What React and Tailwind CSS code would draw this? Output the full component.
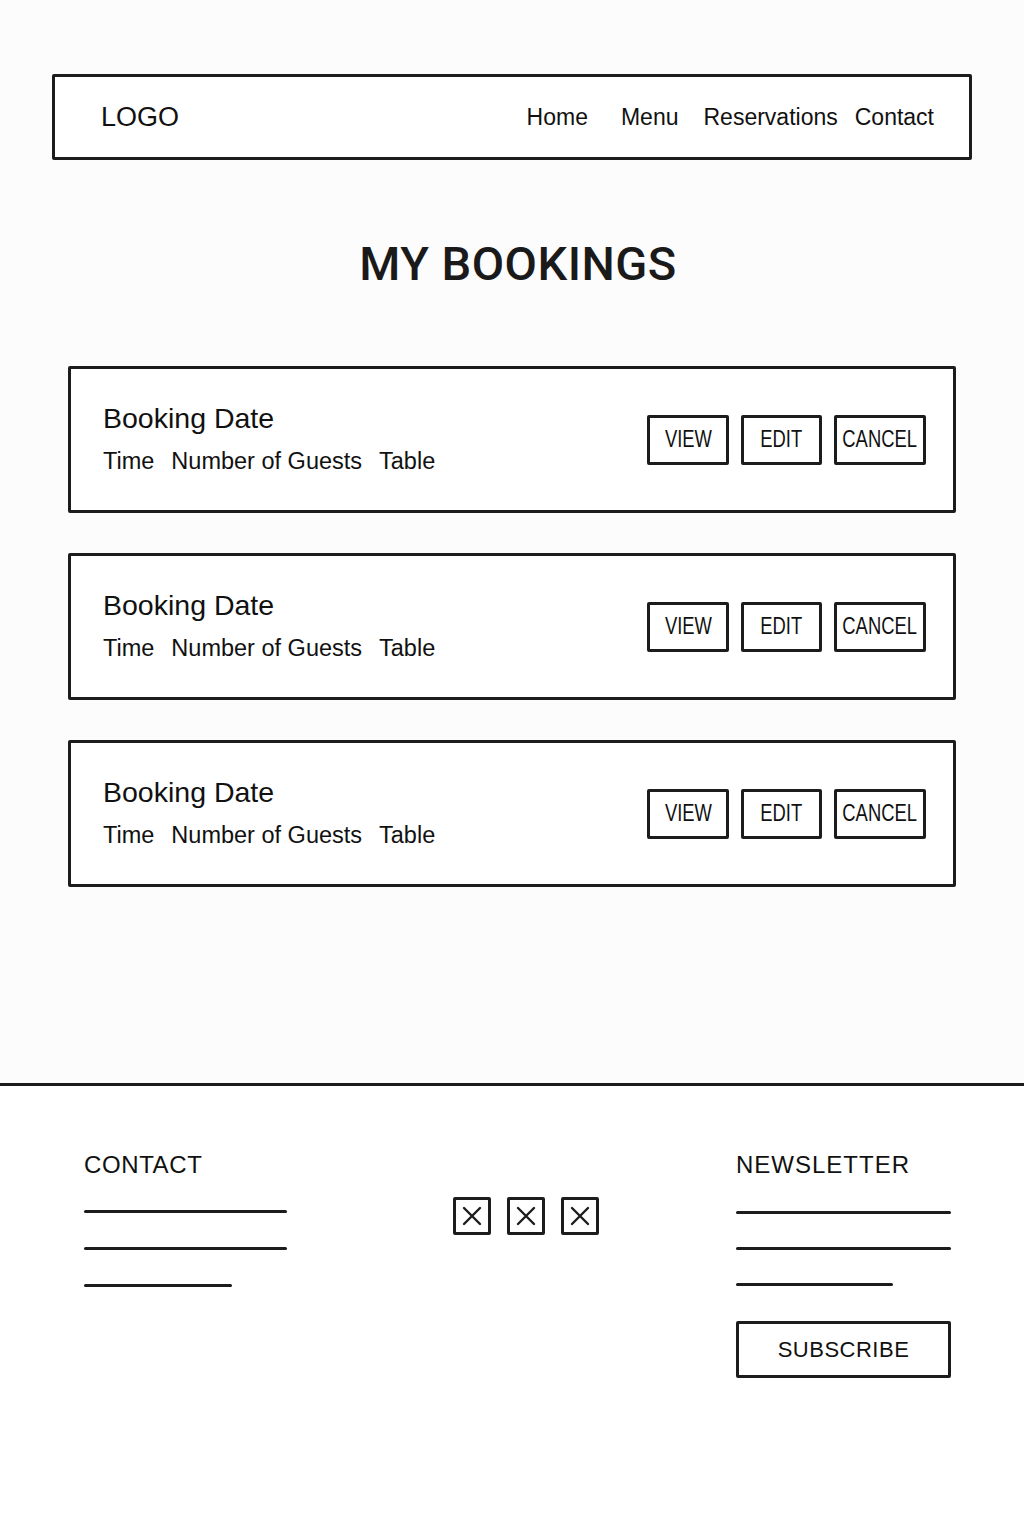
import React from 'react';

const bookings = [1, 2, 3];

function XBox() {
    return (
        <div className="w-[38px] h-[38px] border-[3px] border-[#1c1c1c] rounded-[2px] bg-white flex items-center justify-center">
            <svg width="20" height="20" viewBox="0 0 20 20" fill="none" stroke="#1c1c1c" strokeWidth="2.4" strokeLinecap="round">
                <path d="M2 2 L18 18 M18 2 L2 18" />
            </svg>
        </div>
    );
}

function Line({ w }) {
    return <div className={`h-[3px] rounded-full bg-[#1c1c1c] ${w}`} />;
}

function ActionButton({ label, width }) {
    return (
        <button className={`${width} h-[50px] border-[3px] border-[#1c1c1c] rounded-[2px] bg-white flex items-center justify-center`}>
            <span className="inline-block scale-x-[0.8] text-[23px] leading-none">{label}</span>
        </button>
    );
}

function BookingCard() {
    return (
        <div className="h-[147px] border-[3px] border-[#1c1c1c] rounded-[2px] bg-white pl-[32px] pr-[27px] flex items-center justify-between">
            <div className="-mt-[2px]">
                <div className="text-[28.5px] leading-none text-[#111]">Booking Date</div>
                <div className="mt-[18px] text-[23.5px] leading-none text-[#111] flex gap-[17px]">
                    <span>Time</span>
                    <span>Number of Guests</span>
                    <span>Table</span>
                </div>
            </div>
            <div className="flex gap-[12px] text-[#111]">
                <ActionButton label="VIEW" width="w-[82px]" />
                <ActionButton label="EDIT" width="w-[81px]" />
                <ActionButton label="CANCEL" width="w-[92px]" />
            </div>
        </div>
    );
}

export default function App() {
    return (
        <div className="min-h-[1536px] bg-[#fcfcfc] font-['Liberation_Sans',sans-serif] text-[#111] flex flex-col">
            <div className="pt-[74px] px-[52px]">
                <header className="h-[86px] border-[3px] border-[#1c1c1c] rounded-[2px] bg-white pl-[46px] pr-[35px] flex items-center justify-between">
                    <div className="text-[27px] leading-none">LOGO</div>
                    <nav className="flex text-[23px] leading-none">
                        <a>Home</a>
                        <a className="ml-[33px]">Menu</a>
                        <a className="ml-[25px]">Reservations</a>
                        <a className="ml-[17px]">Contact</a>
                    </nav>
                </header>
            </div>

            <h1 className="mt-[80px] pl-[12px] text-center font-['Roboto',sans-serif] text-[47px] leading-none font-medium tracking-[0.5px] text-[#1a1a1a]">MY BOOKINGS</h1>

            <main className="mt-[79px] px-[68px] flex flex-col gap-[40px]">
                {bookings.map(b => (
                    <BookingCard key={b} />
                ))}
            </main>

            <footer className="mt-[196px] border-t-[3px] border-[#1c1c1c] bg-white flex-1 pl-[84px] pr-[73px] pt-[67px] flex">
                <div className="w-[203px]">
                    <div className="text-[24px] leading-none tracking-[0.6px]">CONTACT</div>
                    <div className="mt-[33px] flex flex-col gap-[34px]">
                        <Line w="w-[203px]" />
                        <Line w="w-[203px]" />
                        <Line w="w-[148px]" />
                    </div>
                </div>
                <div className="ml-[166px] mt-[44px] flex gap-[16px] self-start">
                    <XBox />
                    <XBox />
                    <XBox />
                </div>
                <div className="ml-auto w-[215px]">
                    <div className="text-[24px] leading-none tracking-[1px]">NEWSLETTER</div>
                    <div className="mt-[34px] flex flex-col gap-[33px]">
                        <Line w="w-[215px]" />
                        <Line w="w-[215px]" />
                        <Line w="w-[157px]" />
                    </div>
                    <button className="mt-[35px] w-[215px] h-[57px] border-[3px] border-[#1c1c1c] rounded-[2px] bg-white text-[22px] tracking-[0.5px]">SUBSCRIBE</button>
                </div>
            </footer>
        </div>
    );
}
